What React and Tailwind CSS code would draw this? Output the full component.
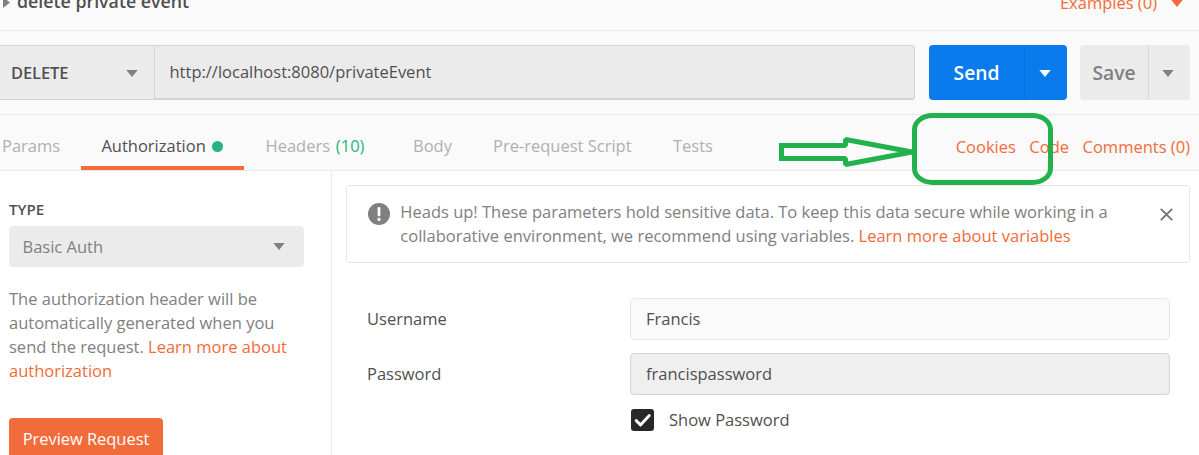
import React from 'react';

function Caret({ className = '' }) {
  return (
    <svg className={`h-[7px] w-[12px] shrink-0 ${className}`} viewBox="0 0 12 7" fill="currentColor">
      <path d="M0.3 0h11.4L6 7z" />
    </svg>
  );
}

function TitleBar() {
  return (
    <div className="flex h-[31px] shrink-0 items-start justify-between border-b border-[#eaeaea]">
      <div className="flex text-[#505050]">
        <svg className="mt-[-3px] ml-[3px] h-[11px] w-[7px]" viewBox="0 0 7 11" fill="#808080">
          <path d="M0 0v11l7-5.5z" />
        </svg>
        <h1 className="mt-[-12px] ml-[7px] text-[17.8px] leading-[26px] font-semibold whitespace-nowrap">delete private event</h1>
      </div>
      <div className="flex text-[#f26b3a]">
        <span className="mt-[-9px] text-[16.5px] leading-6 whitespace-nowrap">Examples (0)</span>
        <Caret className="mr-[16px] ml-[14px]" />
      </div>
    </div>
  );
}

function RequestBar() {
  return (
    <div className="flex h-[84px] shrink-0 items-center border-b border-[#eaeaea] pr-[9px]">
      <div className="flex h-[55px] w-[915px] shrink-0 rounded-r-[3px] border border-l-0 border-[#d4d4d4] bg-[#ebebeb] text-[#505050]">
        <div className="flex w-[155px] shrink-0 items-center justify-between border-r border-[#d4d4d4] pr-[16px] pl-[11px]">
          <span className="text-[16.5px] leading-6 font-semibold tracking-[-0.1px]">DELETE</span>
          <Caret className="mt-[1px] text-[#808080]" />
        </div>
        <div className="flex flex-1 items-center border-b border-[#d4d4d4] pl-[14.5px] text-[16.5px] leading-6">
          <span>http://localhost:8080/privateEvent</span>
        </div>
      </div>
      <div className="ml-[14px] flex h-[55px] w-[138px] shrink-0 overflow-hidden rounded-[4px] bg-[#097bed] text-white">
        <div className="flex w-[95px] items-center justify-center pt-[2px] text-[19.25px] font-semibold">Send</div>
        <div className="flex flex-1 items-center justify-center border-l border-[#0a6fd6] pr-[2px]">
          <Caret className="mt-[2px]" />
        </div>
      </div>
      <div className="ml-[13px] flex h-[55px] w-[110px] shrink-0 overflow-hidden rounded-[4px] bg-[#ebebeb] text-[#808080]">
        <div className="flex w-[68px] items-center justify-center pt-[2px] text-[19.25px] font-semibold">Save</div>
        <div className="flex flex-1 items-center border-l border-[#d8d8d8] pl-[13px]">
          <Caret className="mt-[2px]" />
        </div>
      </div>
    </div>
  );
}

function TabBar() {
  return (
    <div className="flex h-[56px] shrink-0 justify-between border-b border-[#eaeaea] text-[16.5px] leading-6 whitespace-nowrap text-[#b0b0b0]">
      <div className="flex">
        <div className="w-[81px] pt-[19px] pl-[2px]">Params</div>
        <div className="flex w-[163px] border-b-4 border-[#f26b3a] pt-[19px] pl-[20.4px] text-[#505050]">
          Authorization
          <span className="mt-[7px] ml-[6px] h-[11px] w-[11px] rounded-full bg-[#26b47f]" />
        </div>
        <div className="w-[148px] pt-[19px] pl-[21.5px]">
          Headers <span className="ml-[1.5px] text-[#26b47f]">(10)</span>
        </div>
        <div className="w-[80px] pt-[19px] pl-[21px]">Body</div>
        <div className="w-[180px] pt-[19px] pl-[21px]">Pre-request Script</div>
        <div className="pt-[19px] pl-[21px]">Tests</div>
      </div>
      <div className="flex gap-[13.5px] pt-[20px] pr-[9px] text-[#f26b3a]">
        <span>Cookies</span>
        <span>Code</span>
        <span>Comments (0)</span>
      </div>
    </div>
  );
}

function Sidebar() {
  return (
    <aside className="flex w-[332px] shrink-0 flex-col items-start border-r border-[#eaeaea] pt-[26px] pl-[9px]">
      <div className="text-[15.1px] leading-6 font-semibold text-[#505050]">TYPE</div>
      <div className="mt-[5px] flex h-[41px] w-[295px] items-center justify-between rounded-[4px] bg-[#ebebeb] pr-[19px] pl-[13.5px] text-[16.5px] text-[#808080]">
        <span className="pt-[2px]">Basic Auth</span>
        <Caret />
      </div>
      <p className="mt-[20px] w-[295px] text-[16.5px] leading-6 text-[#808080]">
        The authorization header will be automatically generated when you send the request.{' '}
        <a className="text-[#f26b3a]">Learn more about authorization</a>
      </p>
      <button className="mt-[35px] h-[41px] w-[154px] rounded-[4px] bg-[#f26b3a] pt-[2px] text-[16.5px] font-medium tracking-[-0.05px] whitespace-nowrap text-white">
        Preview Request
      </button>
    </aside>
  );
}

function Notice() {
  return (
    <div className="flex h-[78px] w-[844px] shrink-0 rounded-[4px] border border-[#e6e6e6] pt-[14px] pl-[21px]">
      <svg className="mt-[3px] h-[22px] w-[22px] shrink-0" viewBox="0 0 22 22">
        <circle cx="11" cy="11" r="11" fill="#808080" />
        <path d="M11 5.3v6.8" stroke="#fff" strokeWidth="2.8" strokeLinecap="round" />
        <circle cx="11" cy="16.4" r="1.6" fill="#fff" />
      </svg>
      <p className="ml-[10.3px] w-[730px] shrink-0 text-[16.51px] leading-6 whitespace-nowrap text-[#808080]">
        Heads up! These parameters hold sensitive data. To keep this data secure while working in a<br />
        collaborative environment, we recommend using variables. <a className="text-[#f26b3a]">Learn more about variables</a>
      </p>
      <svg className="mt-[7.500px] ml-[30.200px] h-[13px] w-[13px] shrink-0" viewBox="0 0 13 13" stroke="#757575" strokeWidth="1.9">
        <path d="M0.8 0.8l11.4 11.4M12.2 0.8L0.8 12.2" />
      </svg>
    </div>
  );
}

function AuthForm() {
  return (
    <main className="flex flex-1 flex-col pt-[14px] pl-[14px] text-[16.5px] leading-6 text-[#505050]">
      <Notice />
      <div className="mt-[35px] flex items-center pl-[21px]">
        <label className="w-[263px]">Username</label>
        <div className="flex h-[42px] w-[540px] items-center rounded-[4px] border border-[#e6e6e6] bg-[#fafafa] pl-[15px]">Francis</div>
      </div>
      <div className="mt-[13px] flex items-center pl-[21px]">
        <label className="w-[263px]">Password</label>
        <div className="flex h-[42px] w-[540px] items-center rounded-[4px] border border-[#d4d4d4] bg-[#efefef] pl-[15px]">francispassword</div>
      </div>
      <div className="mt-[13px] flex items-center pl-[285px]">
        <svg className="h-[22px] w-[23px]" viewBox="0 0 23 22">
          <rect width="23" height="22" rx="3" fill="#282828" />
          <path d="M5.2 11.6l4.3 4.3L18.3 6.6" fill="none" stroke="#fff" strokeWidth="2.9" strokeLinecap="round" strokeLinejoin="round" />
        </svg>
        <span className="ml-[15px]">Show Password</span>
      </div>
    </main>
  );
}

// Hand-drawn arrow and frame that point out the Cookies link.
function Annotation() {
  return (
    <svg className="pointer-events-none absolute top-[105px] left-[770px] h-[90px] w-[300px]" viewBox="770 105 300 90" fill="none" stroke="#22b14c">
      <path d="M781.5 145.5H845.5V139.5L912 152L845.5 164.5V158.5H781.5Z" strokeWidth="5" strokeLinejoin="bevel" />
      <path d="M779 143h5v18h-5z" fill="#22b14c" stroke="none" />
      <rect x="914.5" y="115.5" width="136" height="67" rx="18" ry="14" strokeWidth="5" />
    </svg>
  );
}

export default function App() {
  return (
    <div className="relative flex h-[455px] w-[1199px] flex-col overflow-hidden bg-[#fafafa] font-['Open_Sans',sans-serif]">
      <TitleBar />
      <RequestBar />
      <TabBar />
      <div className="flex flex-1 bg-white">
        <Sidebar />
        <AuthForm />
      </div>
      <Annotation />
    </div>
  );
}
